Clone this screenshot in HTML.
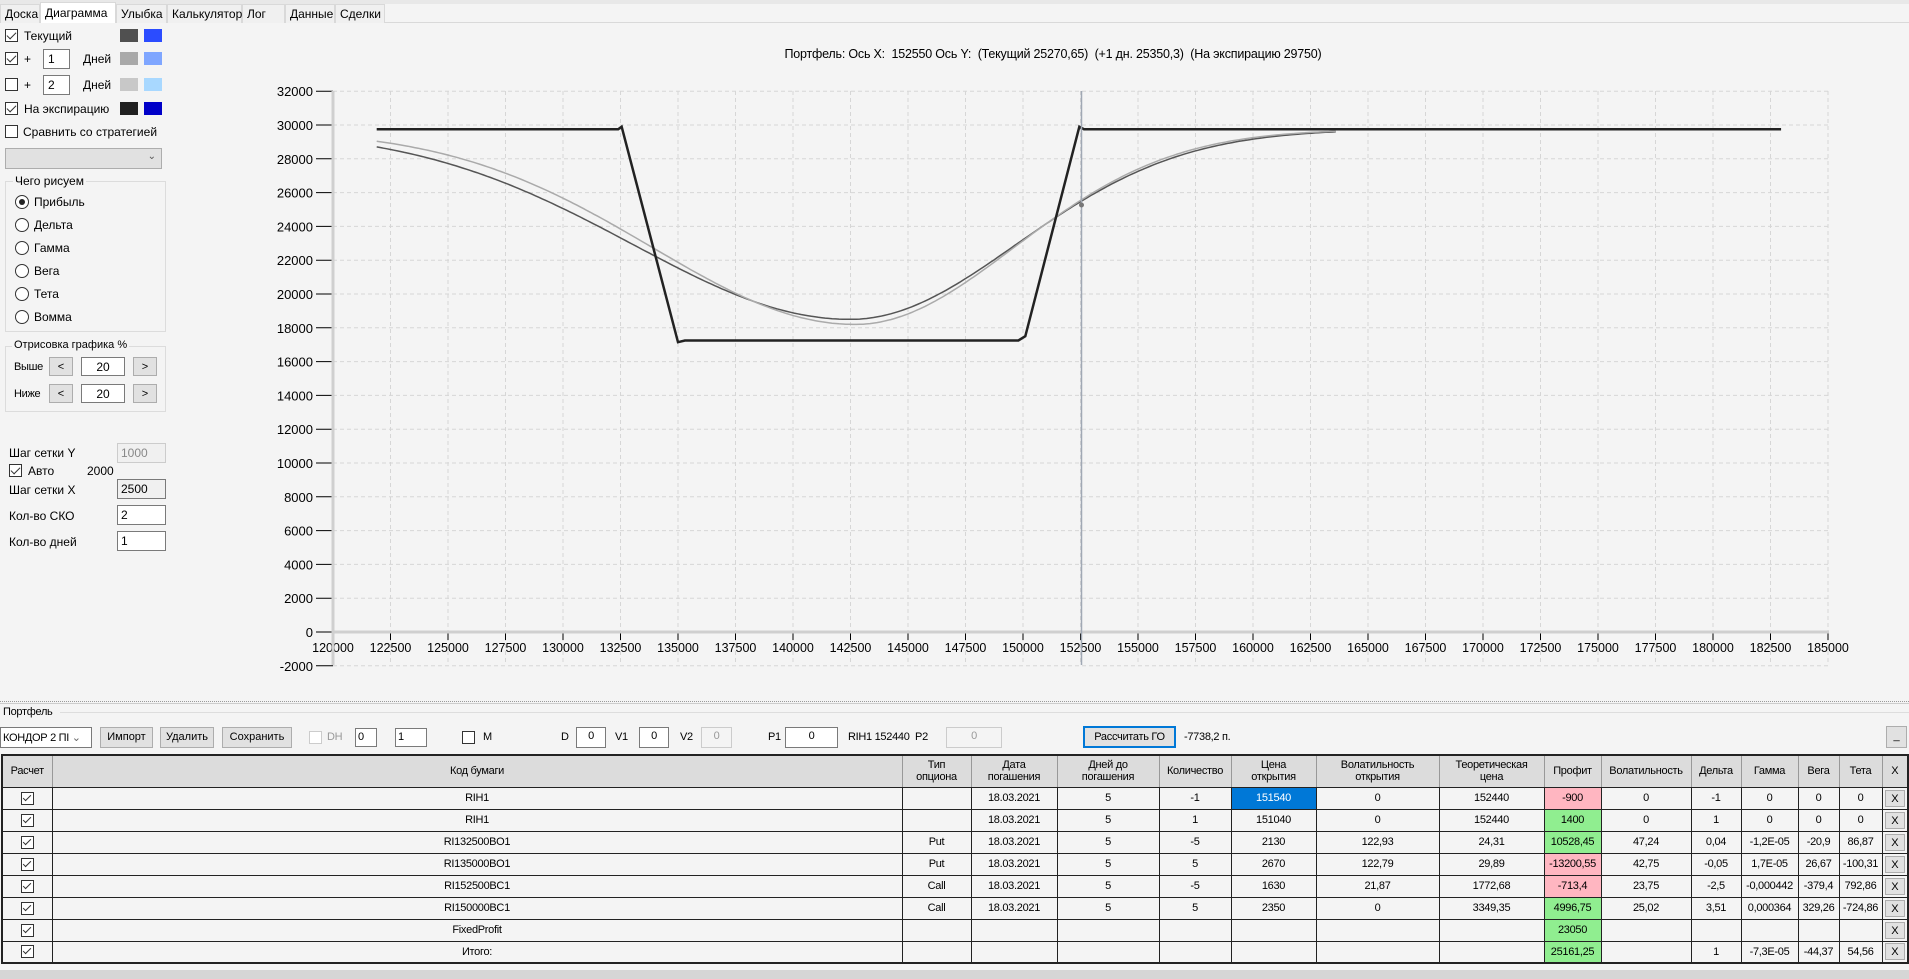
<!DOCTYPE html>
<html><head><meta charset="utf-8">
<style>
*{box-sizing:border-box;margin:0;padding:0}
body{width:1909px;height:979px;background:#f4f4f4;font-family:"Liberation Sans",sans-serif;font-size:12px;color:#000;position:relative;overflow:hidden}
.a{position:absolute;white-space:nowrap}
.tab{position:absolute;top:4px;height:19px;border:1px solid #d9d9d9;border-bottom:none;background:#f0f0f0;font-size:12px;padding:2px 0 0 4px}
.cb{position:absolute;width:13px;height:13px;border:1px solid #333;background:#fff}
.cb.c::after{content:"";position:absolute;left:3px;top:0px;width:4px;height:8px;border:solid #333;border-width:0 1.5px 1.5px 0;transform:rotate(45deg)}
.rd{position:absolute;width:14px;height:14px;border:1px solid #333;border-radius:50%;background:#fff}
.rd.c::after{content:"";position:absolute;left:3px;top:3px;width:6px;height:6px;border-radius:50%;background:#222}
.tb{position:absolute;background:#fff;border:1px solid #7a7a7a;font-size:12px;padding:2px 3px}
.sw{position:absolute;width:18px;height:13px}
.btn{position:absolute;background:#e1e1e1;border:1px solid #adadad;font-size:11px;text-align:center;padding-top:3px}
.grp{position:absolute;border:1px solid #dcdcdc}
.sm{font-size:11px;letter-spacing:-0.3px}
table{position:absolute;left:1px;top:754px;border-collapse:collapse;font-size:11px;letter-spacing:-0.3px;border:2px solid #222;table-layout:fixed;width:1906px}
td{border:1px solid #222;text-align:center;height:22px;padding:0;background:#f4f4f4;overflow:hidden}
thead td{background:#dcdcdc;height:32px;line-height:12px;border-color:#999 #999 #222 #999}
.x{background:#e1e1e1;border:1px solid #adadad;display:block;margin:1px 2px;height:17px;line-height:16px}
.pk{background:#ffb6c1}.gr{background:#90ee90}.bl{background:#0078d7;color:#fff}
</style></head><body>
<div class="a" style="left:0;top:0;width:1909px;height:4px;background:#e8e8e8"></div>
<div class="a" style="left:0;top:22px;width:1909px;height:1px;background:#d9d9d9"></div>
<div class="tab" style="left:0;width:40px">Доска</div>
<div class="tab" style="left:40px;width:76px;top:2px;height:21px;background:#fff;padding-top:3px">Диаграмма</div>
<div class="tab" style="left:116px;width:51px">Улыбка</div>
<div class="tab" style="left:167px;width:75px">Калькулятор</div>
<div class="tab" style="left:242px;width:43px">Лог</div>
<div class="tab" style="left:285px;width:50px">Данные</div>
<div class="tab" style="left:335px;width:50px">Сделки</div>

<div class="cb c" style="left:5px;top:29px"></div><div class="a" style="left:24px;top:29px">Текущий</div>
<div class="sw" style="left:120px;top:29px;background:#505050"></div><div class="sw" style="left:144px;top:29px;background:#2b4cff"></div>
<div class="cb c" style="left:5px;top:52px"></div><div class="a" style="left:24px;top:52px">+</div>
<div class="tb" style="left:43px;top:49px;width:27px;height:20px;padding:2px 4px">1</div><div class="a" style="left:83px;top:52px">Дней</div>
<div class="sw" style="left:120px;top:52px;background:#a9a9a9"></div><div class="sw" style="left:144px;top:52px;background:#7fa6ff"></div>
<div class="cb" style="left:5px;top:78px"></div><div class="a" style="left:24px;top:78px">+</div>
<div class="tb" style="left:43px;top:75px;width:27px;height:20px;padding:2px 4px">2</div><div class="a" style="left:83px;top:78px">Дней</div>
<div class="sw" style="left:120px;top:78px;background:#c8c8c8"></div><div class="sw" style="left:144px;top:78px;background:#a8d8ff"></div>
<div class="cb c" style="left:5px;top:102px"></div><div class="a" style="left:24px;top:102px">На экспирацию</div>
<div class="sw" style="left:120px;top:102px;background:#202020"></div><div class="sw" style="left:144px;top:102px;background:#0000c8"></div>
<div class="cb" style="left:5px;top:125px"></div><div class="a" style="left:23px;top:125px">Сравнить со стратегией</div>
<div class="a" style="left:5px;top:148px;width:157px;height:21px;background:#e1e1e1;border:1px solid #adadad"><span class="a" style="right:5px;top:2px;font-size:10px;color:#555">&#8964;</span></div>

<div class="grp" style="left:5px;top:181px;width:161px;height:151px"></div>
<div class="a" style="left:13px;top:174px;background:#f4f4f4;padding:0 2px">Чего рисуем</div>
<div class="rd c" style="left:15px;top:195px"></div><div class="a" style="left:34px;top:195px">Прибыль</div>
<div class="rd" style="left:15px;top:218px"></div><div class="a" style="left:34px;top:218px">Дельта</div>
<div class="rd" style="left:15px;top:241px"></div><div class="a" style="left:34px;top:241px">Гамма</div>
<div class="rd" style="left:15px;top:264px"></div><div class="a" style="left:34px;top:264px">Вега</div>
<div class="rd" style="left:15px;top:287px"></div><div class="a" style="left:34px;top:287px">Тета</div>
<div class="rd" style="left:15px;top:310px"></div><div class="a" style="left:34px;top:310px">Вомма</div>

<div class="grp" style="left:5px;top:346px;width:161px;height:66px"></div>
<div class="a" style="left:12px;top:339px;background:#f4f4f4;padding:0 2px;font-size:11px">Отрисовка графика %</div>
<div class="a sm" style="left:14px;top:361px">Выше</div>
<div class="btn" style="left:49px;top:357px;width:24px;height:19px">&lt;</div>
<div class="tb" style="left:81px;top:357px;width:44px;height:19px;text-align:center;padding:2px">20</div>
<div class="btn" style="left:133px;top:357px;width:24px;height:19px">&gt;</div>
<div class="a sm" style="left:14px;top:388px">Ниже</div>
<div class="btn" style="left:49px;top:384px;width:24px;height:19px">&lt;</div>
<div class="tb" style="left:81px;top:384px;width:44px;height:19px;text-align:center;padding:2px">20</div>
<div class="btn" style="left:133px;top:384px;width:24px;height:19px">&gt;</div>

<div class="a" style="left:9px;top:446px">Шаг сетки Y</div>
<div class="tb" style="left:117px;top:443px;width:49px;height:20px;color:#888;border-color:#ccc;background:#f0f0f0">1000</div>
<div class="cb c" style="left:9px;top:464px"></div><div class="a" style="left:28px;top:464px">Авто</div><div class="a" style="left:87px;top:464px">2000</div>
<div class="a" style="left:9px;top:483px">Шаг сетки X</div>
<div class="tb" style="left:117px;top:479px;width:49px;height:20px;background:#f0f0f0">2500</div>
<div class="a" style="left:9px;top:509px">Кол-во СКО</div>
<div class="tb" style="left:117px;top:505px;width:49px;height:20px">2</div>
<div class="a" style="left:9px;top:535px">Кол-во дней</div>
<div class="tb" style="left:117px;top:531px;width:49px;height:20px">1</div>

<div class="a" style="left:0;width:2106px;top:47px;text-align:center;font-size:12.5px;letter-spacing:-0.2px">Портфель: Ось X:&nbsp; 152550 Ось Y:&nbsp; (Текущий 25270,65)&nbsp; (+1 дн. 25350,3)&nbsp; (На экспирацию 29750)</div>

<svg class="a" style="left:0;top:0" width="1909" height="700" id="ch" font-family="Liberation Sans" font-size="13"></svg>

<div class="a" style="left:0;top:701px;width:1909px;height:3px;border-top:1px dotted #999;border-bottom:1px solid #ccc"></div>
<div class="a sm" style="left:3px;top:706px">Портфель</div>
<div class="a" style="left:60px;top:712px;width:1849px;height:1px;background:#ddd"></div>
<div class="a sm" style="left:0;top:727px;width:92px;height:21px;background:#fff;border:1px solid #7a7a7a;padding:3px 2px">КОНДОР 2 ПІ <span style="color:#666">&#8964;</span></div>
<div class="btn" style="left:100px;top:727px;width:53px;height:21px">Импорт</div>
<div class="btn" style="left:160px;top:727px;width:54px;height:21px">Удалить</div>
<div class="btn" style="left:222px;top:727px;width:70px;height:21px">Сохранить</div>
<div class="cb" style="left:309px;top:731px;border-color:#ccc"></div><div class="a sm" style="left:327px;top:731px;color:#999">DH</div>
<div class="tb sm" style="left:355px;top:728px;width:22px;height:19px;padding:2px">0</div>
<div class="tb sm" style="left:395px;top:728px;width:32px;height:19px;padding:2px">1</div>
<div class="cb" style="left:462px;top:731px"></div><div class="a sm" style="left:483px;top:731px">M</div>
<div class="a sm" style="left:561px;top:731px">D</div><div class="tb sm" style="left:576px;top:727px;width:30px;height:21px;text-align:center">0</div>
<div class="a sm" style="left:615px;top:731px">V1</div><div class="tb sm" style="left:639px;top:727px;width:30px;height:21px;text-align:center">0</div>
<div class="a sm" style="left:680px;top:731px">V2</div><div class="tb sm" style="left:701px;top:727px;width:31px;height:21px;text-align:center;color:#999;border-color:#ccc;background:#f4f4f4">0</div>
<div class="a sm" style="left:768px;top:731px">P1</div><div class="tb sm" style="left:785px;top:727px;width:53px;height:21px;text-align:center">0</div>
<div class="a sm" style="left:848px;top:731px">RIH1 152440&nbsp; P2</div>
<div class="tb sm" style="left:946px;top:727px;width:56px;height:21px;text-align:center;color:#999;border-color:#ccc;background:#f4f4f4">0</div>
<div class="btn sm" style="left:1083px;top:726px;width:93px;height:22px;border:2px solid #0078d7">Рассчитать ГО</div>
<div class="a sm" style="left:1184px;top:731px">-7738,2 п.</div>
<div class="btn" style="left:1886px;top:726px;width:21px;height:22px">_</div>

<table>
<colgroup><col style="width:50px"><col style="width:850px"><col style="width:69px"><col style="width:86px"><col style="width:102px"><col style="width:72px"><col style="width:85px"><col style="width:123px"><col style="width:105px"><col style="width:57px"><col style="width:90px"><col style="width:50px"><col style="width:57px"><col style="width:41px"><col style="width:43px"><col style="width:26px"></colgroup>
<thead><tr><td>Расчет</td><td>Код бумаги</td><td>Тип<br>опциона</td><td>Дата<br>погашения</td><td>Дней до<br>погашения</td><td>Количество</td><td>Цена<br>открытия</td><td>Волатильность<br>открытия</td><td>Теоретическая<br>цена</td><td>Профит</td><td>Волатильность</td><td>Дельта</td><td>Гамма</td><td>Вега</td><td>Тета</td><td>X</td></tr></thead>
<tbody id="tb"></tbody>
</table>
<div class="a" style="left:0;top:970px;width:1909px;height:9px;background:#d6d6d6"></div>

<script>
var rows=[
["RIH1","","18.03.2021","5","-1","151540","0","152440","-900","0","-1","0","0","0","pk",1],
["RIH1","","18.03.2021","5","1","151040","0","152440","1400","0","1","0","0","0","gr"],
["RI132500BO1","Put","18.03.2021","5","-5","2130","122,93","24,31","10528,45","47,24","0,04","-1,2E-05","-20,9","86,87","gr"],
["RI135000BO1","Put","18.03.2021","5","5","2670","122,79","29,89","-13200,55","42,75","-0,05","1,7E-05","26,67","-100,31","pk"],
["RI152500BC1","Call","18.03.2021","5","-5","1630","21,87","1772,68","-713,4","23,75","-2,5","-0,000442","-379,4","792,86","pk"],
["RI150000BC1","Call","18.03.2021","5","5","2350","0","3349,35","4996,75","25,02","3,51","0,000364","329,26","-724,86","gr"],
["FixedProfit","","","","","","","","23050","","","","","","gr"],
["Итого:","","","","","","","","25161,25","","1","-7,3E-05","-44,37","54,56","gr"]];
var h="";
rows.forEach(function(r){h+='<tr><td><span style="display:inline-block;width:13px;height:13px;border:1px solid #333;background:#fff;position:relative;vertical-align:middle"><span style="position:absolute;left:3px;top:0;width:4px;height:8px;border:solid #333;border-width:0 1.5px 1.5px 0;transform:rotate(45deg)"></span></span></td>';
for(var i=0;i<14;i++){var c='';if(i==8)c=r[14];if(i==5&&r[15])c='bl';h+='<td class="'+c+'">'+r[i]+'</td>';}
h+='<td><span class="x">X</span></td></tr>';});
document.getElementById('tb').innerHTML=h;

var X=function(v){return 333+(v-120000)/2500*57.5},Y=function(p){return 632-p/2000*33.8};
var s='';
for(var p=-2000;p<=32000;p+=2000){var y=Y(p);s+='<line x1="333" x2="1829" y1="'+y+'" y2="'+y+'" stroke="#d6d6d6" stroke-dasharray="4,3"/>';
s+='<line x1="316" x2="333" y1="'+y+'" y2="'+y+'" stroke="#000"/>';
s+='<text x="313" y="'+(y+5)+'" text-anchor="end">'+p+'</text>';}
for(var v=120000;v<=185000;v+=2500){var x=X(v);if(v>120000)s+='<line x1="'+x+'" x2="'+x+'" y1="91" y2="665" stroke="#d6d6d6" stroke-dasharray="4,3"/>';
s+='<line x1="'+x+'" x2="'+x+'" y1="632" y2="640" stroke="#000"/>';
s+='<text x="'+x+'" y="652" text-anchor="middle" font-size="12.5">'+v+'</text>';}
s+='<line x1="333" x2="333" y1="91" y2="665" stroke="#cfcfcf" stroke-width="3"/>';
s+='<line x1="333" x2="1829" y1="632" y2="632" stroke="#cfcfcf" stroke-width="3"/>';
function curve(A,sl,sr,mn,col,w){var d='';for(var v=121900;v<=163600;v+=150){var dv=v-mn,sg=dv<0?sl:sr;var p=29750-A*Math.exp(-dv*dv/(2*sg*sg));d+=(d?'L':'M')+X(v).toFixed(1)+','+Y(p).toFixed(1);}
s+='<path d="'+d+'" fill="none" stroke="'+col+'" stroke-width="'+w+'"/>';}
curve(11250,9454,7200,142500,'#555',1.5);
curve(11550,8804,6900,142700,'#aaa',1.5);
var e='M'+X(121900)+','+Y(29750)+'L'+X(132400)+','+Y(29750)+'L'+X(132550)+','+Y(29900)+'L'+X(135000)+','+Y(17150)+'L'+X(135300)+','+Y(17250)+'L'+X(149800)+','+Y(17250)+'L'+X(150100)+','+Y(17500)+'L'+X(152450)+','+Y(29900)+'L'+X(152650)+','+Y(29750)+'L'+X(182960)+','+Y(29750);
s+='<path d="'+e+'" fill="none" stroke="#222" stroke-width="2.5"/>';
s+='<line x1="1081.5" x2="1081.5" y1="91" y2="665" stroke="#a0a8b4" stroke-width="1.5"/>';
s+='<circle cx="1081.5" cy="205" r="2.5" fill="#777"/>';
document.getElementById('ch').innerHTML=s;
</script>
</body></html>
